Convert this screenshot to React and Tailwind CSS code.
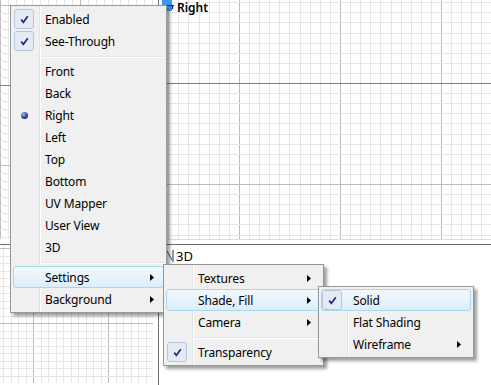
import React from 'react';

// grid drawing for the viewports
function Grid({ w, h, minor, major, ox, oy, axisY, gridW, gridH }) {
    const lines = [];
    const gw = gridW ?? w;
    const gh = gridH ?? h;
    const startX = ox - Math.floor(ox / minor) * minor;
    for (let i = 0, x = startX; x < gw; i++, x = startX + i * minor) {
        const isMajor = Math.abs(((x - ox) / major) - Math.round((x - ox) / major)) < 0.01;
        lines.push(<line key={'v' + i} x1={Math.round(x) + 0.5} y1={0} x2={Math.round(x) + 0.5} y2={gh} stroke={isMajor ? '#bcbcbc' : '#e6e6e6'} />);
    }
    const startY = oy - Math.floor(oy / minor) * minor;
    for (let i = 0, y = startY; y < gh; i++, y = startY + i * minor) {
        const isAxis = axisY !== undefined && Math.abs(y - axisY) < 0.5;
        const isMajor = Math.abs(((y - oy) / major) - Math.round((y - oy) / major)) < 0.01;
        lines.push(<line key={'h' + i} x1={0} y1={Math.round(y) + 0.5} x2={gw} y2={Math.round(y) + 0.5} stroke={isAxis ? '#7c7c7c' : isMajor ? '#bcbcbc' : '#e6e6e6'} />);
    }
    return (
        <svg width={w} height={h} className="block">
            {lines}
        </svg>
    );
}

function CheckBox() {
    return (
        <div className="w-[20px] h-[20px] rounded-[3px] border border-[#b6c6e2] bg-[#e5ebf5] flex items-center justify-center">
            <svg width="9" height="9" viewBox="0 0 9 9">
                <path d="M1.2 4.6 L3.4 7.3 L7.8 1.2" fill="none" stroke="#1c2b8c" strokeWidth="1.7" />
            </svg>
        </div>
    );
}

function Radio() {
    return (
        <div className="w-[20px] h-[20px] flex items-center justify-center">
            <div className="w-[7px] h-[7px] rounded-full bg-[radial-gradient(circle_at_35%_30%,#a9b4e6,#2a3a8e_60%,#1a2466)]" />
        </div>
    );
}

function Arrow() {
    return (
        <svg width="4" height="7" viewBox="0 0 4 7" className="block">
            <path d="M0 0 L4 3.5 L0 7 Z" fill="#000" />
        </svg>
    );
}

function Item({ label, check, radio, arrow, hl }) {
    return (
        <div className={`relative h-[22px] flex items-center ${hl ? 'rounded-[3px] border border-[#a8d8eb] bg-[linear-gradient(to_bottom,#f2f9fd,#dcedf9)]' : 'border border-transparent'}`}>
            <div className="w-[20px] flex items-center justify-center">
                {check && <CheckBox />}
                {radio && <Radio />}
            </div>
            <span className="ml-[11px] pt-[2px] flex-1 text-[12px] leading-none tracking-[-0.15px] text-black">{label}</span>
            {arrow && <div className="mr-[9px]"><Arrow /></div>}
        </div>
    );
}

function Sep() {
    return (
        <div className="h-[8px] pl-[29px] pt-[4px]">
            <div className="h-px bg-[#e2e3e3]" />
            <div className="h-px bg-white" />
        </div>
    );
}

function Menu({ className, children }) {
    return (
        <div className={`absolute bg-[#f0f0f0] border border-[#979797] p-[2px] shadow-[3px_3px_3px_rgba(0,0,0,0.38)] ${className}`}>
            <div className="absolute top-0 bottom-0 left-[28px] w-[2px] flex">
                <div className="w-px bg-[#e2e3e3]" />
                <div className="w-px bg-white" />
            </div>
            <div className="relative">{children}</div>
        </div>
    );
}

export default function App() {
    return (
        <div className="relative w-[491px] h-[385px] overflow-hidden bg-white font-['Noto_Sans',sans-serif]">
            {/* viewports */}
            <div className="flex flex-col w-full h-full">
                <div className="flex h-[244px]">
                    <div className="w-[158px] h-full">
                        <Grid w={158} h={244} gridW={153} gridH={239} minor={8} major={80} ox={0} oy={85} axisY={85} />
                    </div>
                    <div className="w-px bg-[#6e6e6e]" />
                    <div className="w-[3px]" />
                    <div className="relative flex-1">
                        <Grid w={329} h={244} gridH={239} minor={10.1} major={101} ox={77} oy={83} axisY={83} />
                        <div className="absolute left-0 right-0 top-[239px] h-px bg-[#dcdcdc]" />
                        <div className="absolute left-0 top-0 flex items-start">
                            <svg width="14" height="12" viewBox="0 0 14 12" className="block">
                                <rect x="0" y="0" width="10" height="11" fill="#3d97f5" />
                                <path d="M3 5.5 H12 M10.5 5.5 V9" stroke="#0b1f7a" strokeWidth="1.2" fill="none" />
                            </svg>
                            <span className="ml-[1px] mt-[1px] text-[12px] leading-[14px] font-semibold text-black">Right</span>
                        </div>
                    </div>
                </div>
                <div className="h-px bg-[#6e6e6e]" />
                <div className="flex flex-1">
                    <div className="w-[158px] h-full">
                        <Grid w={158} h={140} gridW={153} gridH={138} minor={7.5} major={75} ox={33} oy={3} />
                    </div>
                    <div className="w-px bg-[#6e6e6e]" />
                    <div className="w-[3px]" />
                    <div className="relative flex-1">
                        <div className="absolute left-[4px] top-[4px] flex items-center">
                            <svg width="8" height="14" viewBox="0 0 8 14" className="block">
                                <path d="M1 2 L6 11" stroke="#3d6ee0" strokeWidth="1.2" />
                                <path d="M7 1 V13" stroke="#333" strokeWidth="1" />
                            </svg>
                            <span className="ml-[2px] text-[13px] leading-[14px] text-black">3D</span>
                        </div>
                    </div>
                </div>
            </div>

            {/* main context menu */}
            <Menu className="left-[10px] top-[5px] w-[157px]">
                <Item label="Enabled" check />
                <Item label="See-Through" check />
                <Sep />
                <Item label="Front" />
                <Item label="Back" />
                <Item label="Right" radio />
                <Item label="Left" />
                <Item label="Top" />
                <Item label="Bottom" />
                <Item label="UV Mapper" />
                <Item label="User View" />
                <Item label="3D" />
                <Sep />
                <Item label="Settings" arrow hl />
                <Item label="Background" arrow />
            </Menu>

            {/* Settings submenu */}
            <Menu className="left-[163px] top-[264px] w-[161px]">
                <Item label="Textures" arrow />
                <Item label="Shade, Fill" arrow hl />
                <Item label="Camera" arrow />
                <Sep />
                <Item label="Transparency" check />
            </Menu>

            {/* Shade, Fill submenu */}
            <Menu className="left-[318px] top-[286px] w-[156px]">
                <Item label="Solid" check hl />
                <Item label="Flat Shading" />
                <Item label="Wireframe" arrow />
            </Menu>
        </div>
    );
}
